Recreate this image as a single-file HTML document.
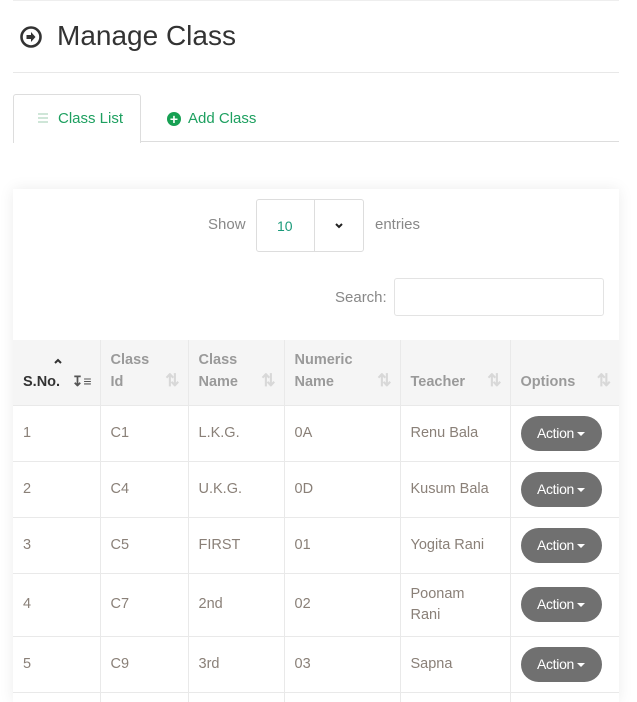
<!DOCTYPE html>
<html><head><style>
*{margin:0;padding:0;box-sizing:border-box}
html,body{width:637px;height:702px;overflow:hidden}
body{background:#fff;font-family:"Liberation Sans",sans-serif;position:relative;color:#333}
.a{position:absolute}
table{border-collapse:collapse;table-layout:fixed}
th,td{border-right:1px solid #e9e9e9;border-bottom:1px solid #e9e9e9;text-align:left;padding:0 10px;font-size:14.5px;position:relative}
th{background:#f5f5f5;color:#9a9a9a;font-weight:bold;vertical-align:bottom;padding-bottom:12px;line-height:22px;height:65px}
td{color:#8a8078;height:56px;vertical-align:middle;line-height:21px}
th .s{position:absolute;right:8px;bottom:13px;color:#d8d8d8;font-size:17px;font-weight:bold}
.btn{display:inline-block;background:#707070;color:#fff;border-radius:18px;width:81px;height:35px;line-height:35px;text-align:center;font-size:14px;letter-spacing:-0.3px}
.car{display:inline-block;border-left:4px solid transparent;border-right:4px solid transparent;border-top:4px solid #fff;vertical-align:middle;margin-left:3px}
</style></head><body>
<div class="a" style="left:13px;top:0;width:606px;height:1px;background:#eee"></div>
<svg class="a" style="left:19px;top:25px" width="24" height="24" viewBox="0 0 24 24"><circle cx="12" cy="12" r="9.5" fill="none" stroke="#333" stroke-width="2.6"/><path d="M7.5 10h4.5v-3l4.5 5-4.5 5v-3h-4.5z" fill="#333"/></svg>
<div class="a" style="left:57px;top:20px;font-size:28px;color:#333">Manage Class</div>
<div class="a" style="left:13px;top:72px;width:606px;height:1px;background:#e8e8e8"></div>
<div class="a" style="left:13px;top:141px;width:606px;height:1px;background:#ddd"></div>
<div class="a" style="left:13px;top:94px;width:128px;height:49px;border:1px solid #ddd;border-bottom:none;border-radius:3px 3px 0 0;background:#fff"></div>
<div class="a" style="left:38px;top:113px;width:10px"><div style="height:2px;background:#cfe6d8;margin-bottom:2px"></div><div style="height:2px;background:#cfe6d8;margin-bottom:2px"></div><div style="height:2px;background:#cfe6d8"></div></div>
<div class="a" style="left:58px;top:110px;font-size:15px;color:#1ea060">Class List</div>
<div class="a" style="left:167px;top:112px;width:14px;height:14px;border-radius:50%;background:#17a053;color:#fff;font-size:14px;line-height:14px;text-align:center;font-weight:bold">+</div>
<div class="a" style="left:188px;top:110px;font-size:15px;color:#1ea060">Add Class</div>

<div class="a" style="left:13px;top:189px;width:606px;height:513px;background:#fff;box-shadow:0 0 14px rgba(0,0,0,0.08);overflow:hidden">
<div class="a" style="left:195px;top:27px;font-size:15px;color:#888">Show</div>
<div class="a" style="left:243px;top:10px;width:108px;height:53px;border:1px solid #ddd;border-radius:3px"><div class="a" style="left:57px;top:0;width:1px;height:51px;background:#ddd"></div><div class="a" style="left:20px;top:18px;font-size:14px;color:#1a9a7a">10</div><svg class="a" style="left:77px;top:22px" width="10" height="8" viewBox="0 0 10 8"><path d="M2 2l3 3 3-3" fill="none" stroke="#222" stroke-width="2"/></svg></div>
<div class="a" style="left:362px;top:27px;font-size:15px;color:#888">entries</div>
<div class="a" style="left:322px;top:100px;font-size:15px;color:#888">Search:</div>
<div class="a" style="left:381px;top:89px;width:210px;height:38px;border:1px solid #e3e3e3;border-radius:3px"></div>
<table class="a" style="left:0;top:151px;width:606px">
<colgroup><col style="width:87px"><col style="width:88px"><col style="width:96px"><col style="width:116px"><col style="width:110px"><col style="width:109px"></colgroup>
<tr><th style="color:#333">S.No.<svg class="a" style="left:40px;top:18px" width="10" height="7" viewBox="0 0 10 7"><path d="M2 5l3-3 3 3" fill="none" stroke="#333" stroke-width="2"/></svg><span class="s" style="color:#555;font-size:14px">&#8615;&#8801;</span></th><th>Class<br>Id<span class="s">&#8645;</span></th><th>Class<br>Name<span class="s">&#8645;</span></th><th>Numeric<br>Name<span class="s">&#8645;</span></th><th>Teacher<span class="s">&#8645;</span></th><th style="border-right:none">Options<span class="s">&#8645;</span></th></tr>
<tr><td>1</td><td>C1</td><td>L.K.G.</td><td>0A</td><td>Renu Bala</td><td style="border-right:none"><span class="btn">Action<span class="car"></span></span></td></tr>
<tr><td>2</td><td>C4</td><td>U.K.G.</td><td>0D</td><td>Kusum Bala</td><td style="border-right:none"><span class="btn">Action<span class="car"></span></span></td></tr>
<tr><td>3</td><td>C5</td><td>FIRST</td><td>01</td><td>Yogita Rani</td><td style="border-right:none"><span class="btn">Action<span class="car"></span></span></td></tr>
<tr><td style="height:63px">4</td><td>C7</td><td>2nd</td><td>02</td><td>Poonam<br>Rani</td><td style="border-right:none"><span class="btn">Action<span class="car"></span></span></td></tr>
<tr><td>5</td><td>C9</td><td>3rd</td><td>03</td><td>Sapna</td><td style="border-right:none"><span class="btn">Action<span class="car"></span></span></td></tr>
<tr><td></td><td></td><td></td><td></td><td></td><td style="border-right:none"></td></tr>
</table>
</div>
</body></html>
